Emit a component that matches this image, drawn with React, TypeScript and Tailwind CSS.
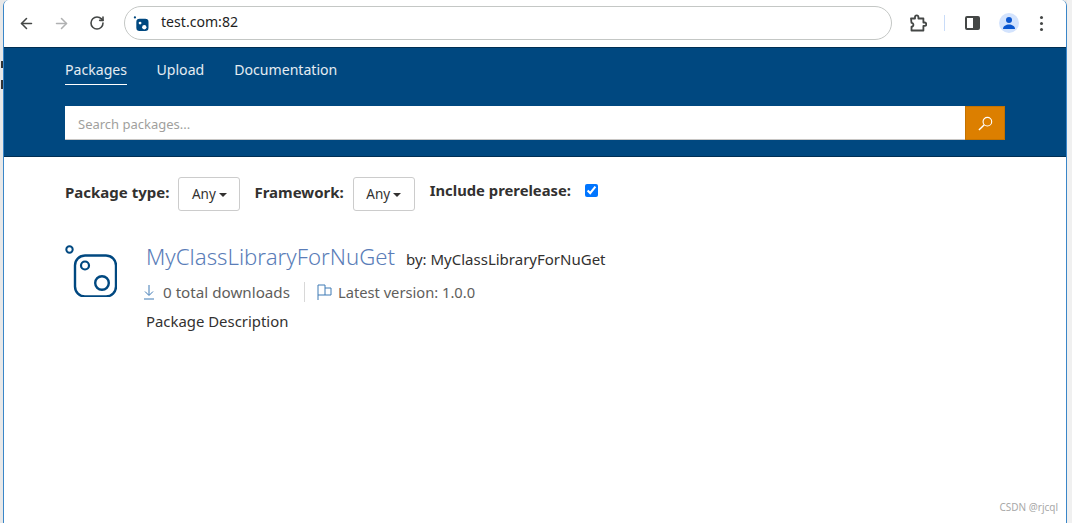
import {ArrowLeft, ArrowRight, RotateCw} from "lucide-react";

const font = {fontFamily: '"Noto Sans", sans-serif'};

function CaretDown() {
  return <span className="ml-[3px] inline-block h-0 w-0 border-x-[4px] border-t-[4px] border-x-transparent border-t-[#323130] align-middle" />;
}

function NuGetLogo({className}: {className: string}) {
  return (
    <svg viewBox="0 0 52 52" className={className} fill="none">
      <circle cx="4.5" cy="4.5" r="3.2" stroke="#004880" strokeWidth="2" />
      <rect x="10" y="10.5" width="41" height="41" rx="10" stroke="#004880" strokeWidth="2.4" />
      <circle cx="20" cy="20.5" r="4" stroke="#004880" strokeWidth="2.2" />
      <circle cx="37" cy="38" r="6.8" stroke="#004880" strokeWidth="2.4" />
    </svg>
  );
}

function Toolbar() {
  return (
    <div className="flex h-[47px] items-center bg-white pb-[1px]">
      <ArrowLeft size={17} strokeWidth={2.2} className="ml-[14px] text-[#444746]" />
      <ArrowRight size={17} strokeWidth={2.2} className="ml-[18px] text-[#b0b1b2]" />
      <RotateCw size={16} strokeWidth={2.4} className="ml-[19px] text-[#444746]" />
      <div className="ml-[19px] flex h-[34px] w-[768px] items-center rounded-full border border-[#c4c7c5] pl-2">
        <svg viewBox="0 0 16 16" className="h-[15px] w-[16px]">
          <circle cx="1.5" cy="1.5" r="1.2" fill="#004880" />
          <rect x="3" y="3" width="13" height="13" rx="3.5" fill="#004880" />
          <circle cx="7" cy="7.5" r="1.5" fill="#fff" />
          <circle cx="11.5" cy="12" r="2.3" fill="#fff" />
        </svg>
        <span className="mb-[2px] ml-[12px] text-[14.1px] text-[#1f1f1f]">test.com:82</span>
      </div>
      <svg viewBox="0 0 18 18" className="ml-[17px] h-[18px] w-[18px]" fill="none" stroke="#444746" strokeWidth="1.8" strokeLinejoin="round">
        <path d="M2 4.5h4V3a1.7 1.7 0 0 1 3.4 0v1.5h5v4h1.2a1.7 1.7 0 0 1 0 3.4h-1.2v4.6H2.500v-3.8a1.900 1.900 0 0 0 0-3.800z" />
      </svg>
      <div className="ml-[17px] h-4 w-px bg-[#c9dcf8]" />
      <div className="ml-[20px] flex h-[14px] w-[15px] overflow-hidden rounded-[2px] border-2 border-[#444746]">
        <div className="flex-1 bg-white" />
        <div className="w-[5px] bg-[#444746]" />
      </div>
      <div className="ml-[19px] flex h-5 w-5 items-center justify-center rounded-full bg-[#d3e3fd]">
        <svg viewBox="0 0 14 14" className="h-[14px] w-[14px]" fill="#0b57d0">
          <circle cx="7" cy="4" r="3" />
          <path d="M1 13c0-3 3-4.500 6-4.500s6 1.500 6 4.500z" />
        </svg>
      </div>
      <div className="ml-[21px] flex flex-col gap-[3px]">
        <span className="h-[3px] w-[3px] rounded-full bg-[#444746]" />
        <span className="h-[3px] w-[3px] rounded-full bg-[#444746]" />
        <span className="h-[3px] w-[3px] rounded-full bg-[#444746]" />
      </div>
    </div>
  );
}

function Header() {
  return (
    <header className="h-[110px] border-y border-[#002f54] bg-[#004880] pl-[61px]">
      <nav className="flex text-[14.1px] text-white/90">
        <a className="mt-[11px] flex h-[26px] items-start border-b border-white">Packages</a>
        <a className="ml-[29.500px] mt-[11px]">Upload</a>
        <a className="ml-[30px] mt-[11px]">Documentation</a>
      </nav>
      <div className="mt-[21px] flex h-[34px] w-[940px]">
        <div className="flex flex-1 items-center border-b border-[#c8c6c4] bg-white pl-[13px] pt-[4px] text-[13px] text-[#a19f9d]">
          Search packages...
        </div>
        <div className="flex w-10 items-center justify-center border border-[#c47200] bg-[#dc7f00]">
          <svg viewBox="0 0 16 16" className="h-[15px] w-[15px]" fill="none" stroke="#fff" strokeWidth="1.2">
            <circle cx="10" cy="6" r="4.600" />
            <path d="M6.700 9.300 1 15" strokeWidth="1.500" />
          </svg>
        </div>
      </div>
    </header>
  );
}

function Filters() {
  return (
    <div className="flex items-start pl-[61px] pt-[20px] text-[#323130]">
      <b className="mt-[4px] text-[15px] font-bold">Package type:</b>
      <button className="ml-[9px] h-[34px] w-[62px] rounded-[3px] border border-[#cccccc] text-[13.5px]">
        Any<CaretDown />
      </button>
      <b className="ml-[14px] mt-[4px] text-[15px] font-bold">Framework:</b>
      <button className="ml-[9px] h-[34px] w-[62px] rounded-[3px] border border-[#cccccc] text-[13.5px]">
        Any<CaretDown />
      </button>
      <b className="ml-[15px] mt-[2px] text-[14.8px] font-bold">Include prerelease:</b>
      <input type="checkbox" defaultChecked className="ml-[14px] mt-[7px] h-[13px] w-[13px] accent-[#0075ff]" />
    </div>
  );
}

function PackageRow() {
  return (
    <div className="flex pl-[61px] pt-[34px] text-[#323130]">
      <NuGetLogo className="h-[52px] w-[52px]" />
      <div className="ml-[29px] mt-[-3px]">
        <div className="flex items-baseline">
          <span className="text-[22.2px] leading-[30px] font-light text-[#5a7db8]">MyClassLibraryForNuGet</span>
          <span className="ml-[11px] text-[15px]">by: MyClassLibraryForNuGet</span>
        </div>
        <div className="mt-[10px] flex h-[20px] items-center text-[#605e5c]">
          <svg viewBox="0 0 12 16" className="ml-[-3px] h-[16px] w-[12px]" fill="none" stroke="#3f7ab5" strokeWidth="1">
            <path d="M6 1v10M2 7.500 6 11.500l4-4M1 15h10" />
          </svg>
          <span className="ml-[8px] text-[15.2px]">0 total downloads</span>
          <div className="ml-[14px] h-[20px] w-px bg-[#d8d8d8]" />
          <svg viewBox="0 0 15 16" className="ml-[12px] h-[16px] w-[15px]" fill="none" stroke="#3f7ab5" strokeWidth="1">
            <path d="M1 16V1h7v10H1M8 4h6v7H8" />
          </svg>
          <span className="ml-[6px] text-[14.7px]">Latest version: 1.0.0</span>
        </div>
        <p className="mt-[8px] text-[14.9px]">Package Description</p>
      </div>
    </div>
  );
}

export default function App() {
  return (
    <div className="relative flex h-[523px] w-[1072px] overflow-hidden bg-[#e8e8e8]" style={font}>
      {/* bits of the window behind, only their edges show */}
      <div className="flex w-[3px] flex-col items-end gap-[12px] pt-[61px]">
        <div className="h-[7px] w-[2px] bg-[#333333]" />
        <div className="h-[9px] w-[2px] bg-[#333333]" />
      </div>
      <main className="w-[1064px] overflow-hidden rounded-t-[6px] border-x border-x-[#3a86c8] bg-white">
        <Toolbar />
        <Header />
        <Filters />
        <PackageRow />
      </main>
      <div className="flex-1 bg-[#f0f0f0]" />
      <span className="absolute bottom-[8px] right-[14px] text-[10px] text-[#a8a8a8]">CSDN @rjcql</span>
    </div>
  );
}
